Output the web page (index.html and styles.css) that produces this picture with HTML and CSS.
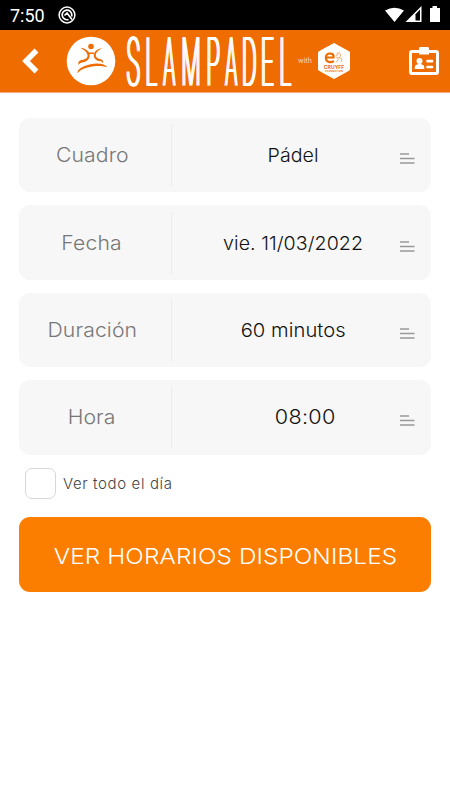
FILE: index.html
```html
<!DOCTYPE html>
<html lang="es">
<head>
<meta charset="utf-8">
<meta name="viewport" content="width=device-width, initial-scale=1">
<title>SlamPadel</title>
<link rel="stylesheet" href="styles.css">
</head>
<body>
<div class="status">
  <span class="clock">7:50</span>
  <svg class="dnd" width="18" height="18" viewBox="0 0 18 18" fill="none" stroke="#fff"><circle cx="9" cy="9" r="7.900" stroke-width="1.500"/><path d="M10.500 13.500A4.800 4.800 0 1 1 13.800 9v1.500M6.500 9.500 9 7l5 6.500" stroke-width="1.700"/></svg>
  <svg class="signals" width="56" height="18" viewBox="0 0 56 18"><path fill="#fff" d="M0 4.500Q9.500-1 19 4.500L9.500 16zM20.500 16 36.500 0v16z"/><path d="M30.500 8.200 35 3.500v11h-4.500z" fill="#000"/><path fill="#fff" d="M45 2h2.500V0h4.500v2H55v14H45z"/></svg>
</div>
<header class="topbar">
  <svg class="back" width="18" height="26" viewBox="0 0 18 26"><path d="M15.500 2.500 5 13l10.500 10.500" fill="none" stroke="#fff" stroke-width="5.500"/></svg>
  <svg class="logo" width="50" height="50" viewBox="0 0 50 50"><circle cx="25" cy="25" r="24.300" fill="#fff"/><g fill="#ee6c00"><circle cx="25" cy="10.500" r="2.800"/><path d="M14.500 11.800c5 .6 8 3.200 9 6 .8 3-.5 6.500-4.500 8-2.500 1-5 .5-6.500 3.200-.8-3 .8-4.500 3-5 4.500-.7 6.500-2.500 6-5-.6-3-3.500-5-7-7.200z"/><path d="M36.500 12.200c-4.500.4-7.500 2.500-8.500 5.300-.8 3 .5 6 4 7.200 2 .7 4-.2 5 2.800.5-3-1-4-2.500-4.200-3.500-.6-5-2.500-4.700-4.800.4-2.600 3-4.600 6.700-6.300zM22 16.500h7l-1 1.500h-5z"/><path d="M11.500 37.500c-.5-4 5-7.500 12-9 8-1.700 14-1 18 2.700-8-2-14-1.500-20 .3-5 1.500-7.500 2.500-10 6z"/></g></svg>
  <div class="wordmark"><span>S</span><span>L</span><span class="a">A</span><span class="wide">M</span><span>P</span><span class="a">A</span><span>D</span><span>E</span><span>L</span></div>
  <span class="with">with</span>
  <svg class="partner" width="32" height="36" viewBox="0 0 32 36"><path d="M16 .5 31.500 9v18L16 35.500.5 27V9z" fill="#fff" stroke="#fff" stroke-linejoin="round"/><path d="M8 14.500h7.500V13c0-3-5-3-6.500-1.500s-1.500 5 0 6.500 5 1 7 .3" fill="none" stroke="#ee6c00" stroke-width="2.200"/><path d="M18.500 10.500q3.500-2 4 1.500t-4 2l2 2-2.500 3.500m3-5 3 1.500-1 3M17.500 13l3-2" fill="none" stroke="#f49a55" stroke-width=".8"/><text x="5.800" y="25.500" class="p-name" textLength="20.500">CRUYFF</text><text x="7" y="29" class="p-sub" textLength="18">FOUNDATION</text></svg>
  <svg class="card-icon" width="30" height="28" viewBox="0 0 30 28"><rect x="1.500" y="4.500" width="27" height="22" rx="1.500" fill="none" stroke="#fff" stroke-width="3"/><path d="M10 1.200Q10 0 11.200 0h7.600Q20 0 20 1.200V7.500H10z" fill="#fff"/><circle cx="10.500" cy="14" r="3" fill="#fff"/><path d="M5.700 22v-2q0-2 3-2.700l1-.6V15h1.600v1.700l1 .6q3 .7 3 2.700v2z" fill="#fff"/><path d="M18.500 14.200h4.500M18.500 20h4.500" stroke="#fff" stroke-width="2.700" stroke-linecap="round"/></svg>
</header>
<main class="form">
  <div class="field"><span class="label"><span class="text">Cuadro</span></span><span class="value"><span class="text">Pádel</span></span><svg class="lines" width="15" height="12" viewBox="0 0 15 12"><path d="M0 1h9M0 5.500h14.500M0 10h14.500"/></svg></div>
  <div class="field"><span class="label"><span class="text">Fecha</span></span><span class="value date"><span class="text">vie. 11/03/2022</span></span><svg class="lines" width="15" height="12" viewBox="0 0 15 12"><path d="M0 1h9M0 5.500h14.500M0 10h14.500"/></svg></div>
  <div class="field"><span class="label"><span class="text">Duración</span></span><span class="value duration"><span class="text">60 minutos</span></span><svg class="lines" width="15" height="12" viewBox="0 0 15 12"><path d="M0 1h9M0 5.500h14.500M0 10h14.500"/></svg></div>
  <div class="field"><span class="label"><span class="text">Hora</span></span><span class="value time"><span class="text">08:00</span></span><svg class="lines" width="15" height="12" viewBox="0 0 15 12"><path d="M0 1h9M0 5.500h14.500M0 10h14.500"/></svg></div>
  <label class="allday"><span class="box"></span><span>Ver todo el día</span></label>
  <button class="submit" type="button"><span class="text">VER HORARIOS DISPONIBLES</span></button>
</main>
</body>
</html>
```

FILE: styles.css
```css
* { box-sizing: border-box; }
body { margin: 0; background: #fff; font-family: Inter, sans-serif; height: 800px; overflow: hidden; }
svg { display: block; flex: none; }
.status { height: 30px; background: #000; color: #fff; display: flex; align-items: center; padding: 0 9px 0 10px; }
.clock { font: 400 18px/30px Roboto, sans-serif; width: 48px; padding-top: 2px; }
.signals { margin-left: auto; }
.topbar { height: 63px; background: #ee6c00; border-bottom: 1px solid #f5a684; display: flex; align-items: center; padding: 0 11px 0 21px; }
.back { margin-right: 27px; }
.wordmark { display: flex; justify-content: space-between; width: 164px; height: 49px; margin: 2px 0 0 11px; color: #fff; font: 100 67px/49px Roboto, sans-serif; text-shadow: 1.5px 0 #fff, 3px 0 #fff, -3px 0 #fff, -1.5px 0 #fff, 3px .5px #fff, -3px .5px #fff, 0 .5px #fff; }
.wordmark span { width: 12.500px; display: flex; justify-content: center; transform: scaleX(.33); }
.wordmark .a { transform: scaleX(.29); }
.wordmark .wide { width: 20px; }
.with { width: 14px; margin-left: 7px; color: #fbd9bf; font-size: 7px; line-height: 10px; }
.partner { margin-left: 6px; }
.p-name { font: 700 5px Inter, sans-serif; fill: #ee6c00; }
.p-sub { font: 700 2.500px Inter, sans-serif; fill: #ee6c00; }
.card-icon { margin-left: auto; }
.form { padding: 25px 19px 0; display: flex; flex-direction: column; }
.field { height: 74.400px; margin-bottom: 13px; background: #f7f7f7; border-radius: 11px; display: flex; align-items: center; }
.text { display: inline-block; transform: scaleX(1.06); }
.label { width: 153px; height: 62px; line-height: 63.500px; padding-right: 6px; border-right: 1.500px solid #ececec; text-align: center; font-size: 20px; font-weight: 300; letter-spacing: .1px; color: #777; white-space: nowrap; }
.value { flex: 1; padding: 0 0 0 15px; text-align: center; font-size: 18.500px; font-weight: 300; letter-spacing: .05px; color: #111; white-space: nowrap; }
.duration .text { transform: scaleX(1.09); }
.time { padding-left: 39px; font-size: 20px; letter-spacing: .3px; }
.time .text { transform: scaleX(1.08); }
.lines { margin: 8px 16.500px 0 0; fill: none; stroke: #999; stroke-width: 1.500; }
.allday { display: flex; align-items: center; height: 31px; margin-left: 6px; gap: 7px; font-size: 15px; font-weight: 300; letter-spacing: .62px; color: #444; }
.box { width: 31px; height: 31px; border: 1px solid #d8d8d8; border-radius: 7px; }
.submit { height: 74.500px; margin-top: 18.900px; padding: 2px 0 0; border: 0; border-radius: 11px; background: #fc7e00; color: #fff; font: 300 22px/1 Inter, sans-serif; letter-spacing: .100px; white-space: nowrap; }
.submit .text { transform: scaleX(1.105); }
```
